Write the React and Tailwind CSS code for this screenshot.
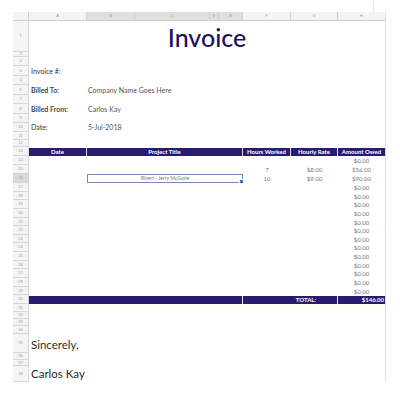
import React from "react";

const DARK = "bg-[#2b1b6f]";

function RowHead({ n, sel }) {
  return (
    <div
      className={`w-[16px] shrink-0 border-r border-b border-[#d6d6d6] flex items-center justify-center text-[4px] leading-none text-[#9a9a9a] font-['Liberation_Sans',sans-serif] ${
        sel ? "bg-[#dadada]" : "bg-[#f4f4f4]"
      }`}
    >
      {n}
    </div>
  );
}

function Row({ n, h, sel, children, className = "" }) {
  return (
    <div className={`flex ${h}`}>
      <RowHead n={n} sel={sel} />
      <div className={`flex-1 flex min-w-0 ${className}`}>{children}</div>
    </div>
  );
}

function AmountRow({ n, h, hours, rate, amount, children }) {
  return (
    <Row n={n} h={h}>
      <div className="w-[58px]" />
      <div className="w-[156px] relative">{children}</div>
      <div className="w-[48px] flex items-center justify-center text-[6px] text-[#777]">{hours}</div>
      <div className="w-[47px] flex items-center justify-center text-[6px] text-[#777]">{rate}</div>
      <div className="w-[47px] flex items-center justify-center text-[6px] text-[#777]">{amount}</div>
    </Row>
  );
}

export default function App() {
  const empty14to29 = [
    [17, "h-[9px]"],
    [18, "h-[8px]"],
    [19, "h-[9px]"],
    [20, "h-[9px]"],
    [21, "h-[8px]"],
    [22, "h-[9px]"],
    [23, "h-[8px]"],
    [24, "h-[9px]"],
    [25, "h-[9px]"],
    [26, "h-[8px]"],
    [27, "h-[9px]"],
    [28, "h-[9px]"],
    [29, "h-[8px]"],
  ];
  const colHead = "border-r border-b border-[#d0d0d0] flex items-center justify-center text-[4px] leading-none text-[#9a9a9a]";
  return (
    <div className="w-[400px] h-[395px] bg-white overflow-hidden pl-[13px] font-['Lato',sans-serif]">
      <div className="h-[12px] flex">
        <div className="ml-[360px] w-px h-full bg-[#ececec]" />
      </div>
      <div className="w-[373px] border-r border-[#dedede]">
        {/* column header */}
        <div className="flex h-[9px] font-['Liberation_Sans',sans-serif]">
          <div className={`w-[16px] bg-[#f4f4f4] ${colHead}`} />
          <div className={`w-[58px] bg-[#f4f4f4] ${colHead}`}>A</div>
          <div className={`w-[48px] bg-[#dfdfdf] ${colHead}`}>B</div>
          <div className={`w-[75px] bg-[#dfdfdf] ${colHead}`}>C</div>
          <div className={`w-[9px] bg-[#dfdfdf] ${colHead}`}>D</div>
          <div className={`w-[24px] bg-[#dfdfdf] ${colHead}`}>E</div>
          <div className={`w-[48px] bg-[#f4f4f4] ${colHead}`}>F</div>
          <div className={`w-[47px] bg-[#f4f4f4] ${colHead}`}>G</div>
          <div className={`w-[47px] bg-[#f4f4f4] border-b border-[#d0d0d0] flex items-center justify-center text-[4px] leading-none text-[#9a9a9a]`}>H</div>
        </div>

        <Row n={1} h="h-[31px]" className="items-center justify-center pt-[2px]">
          <span className="text-[25px] font-medium leading-none text-[#1e1260]">Invoice</span>
        </Row>
        <Row n={2} h="h-[5px]" />
        <Row n={3} h="h-[9px]" />
        <Row n={4} h="h-[10px]" className="items-center text-[7px] text-[#333]">
          <span className="pl-[2px]">Invoice #:</span>
        </Row>
        <Row n={5} h="h-[9px]" />
        <Row n={6} h="h-[10px]" className="items-center text-[7px]">
          <span className="w-[58px] pl-[2px] font-semibold text-[#333]">Billed To:</span>
          <span className="pl-[1px] text-[#555]">Company Name Goes Here</span>
        </Row>
        <Row n={7} h="h-[9px]" />
        <Row n={8} h="h-[10px]" className="items-center text-[7px]">
          <span className="w-[58px] pl-[2px] font-semibold text-[#333]">Billed From:</span>
          <span className="pl-[1px] text-[#555]">Carlos Kay</span>
        </Row>
        <Row n={9} h="h-[9px]" />
        <Row n={10} h="h-[9px]" className="items-center text-[7px]">
          <span className="w-[58px] pl-[2px] text-[#333]">Date:</span>
          <span className="pl-[1px] text-[#555]">5-Jul-2018</span>
        </Row>
        <Row n={11} h="h-[8px]" />
        <Row n={12} h="h-[7px]" />
        <Row n={13} h="h-[9px]" className="pt-[1px] text-[6px] font-bold text-white leading-none">
          <div className={`w-[58px] ${DARK} border-r border-[#e4e2ee] flex items-center justify-center`}>Date</div>
          <div className={`w-[156px] ${DARK} border-r border-[#e4e2ee] flex items-center justify-center`}>Project Title</div>
          <div className={`w-[48px] ${DARK} border-r border-[#e4e2ee] flex items-center justify-center`}>Hours Worked</div>
          <div className={`w-[47px] ${DARK} border-r border-[#e4e2ee] flex items-center justify-center`}>Hourly Rate</div>
          <div className={`w-[47px] ${DARK} flex items-center justify-center`}>Amount Owed</div>
        </Row>

        <AmountRow n={14} h="h-[9px]" amount="$0.00" />
        <AmountRow n={15} h="h-[9px]" hours="7" rate="$8.00" amount="$56.00" />
        <Row n={16} h="h-[9px]" sel>
          <div className="w-[58px]" />
          <div className="w-[156px] relative border border-[#6d8fc6] flex items-center justify-center text-[5px] text-[#777]">
            Rivert - Jerry McGuire
            <span className="absolute right-[-2px] bottom-[-2px] w-[3px] h-[3px] bg-[#3f6fc0] border border-white box-content" />
          </div>
          <div className="w-[48px] flex items-center justify-center text-[6px] text-[#777]">10</div>
          <div className="w-[47px] flex items-center justify-center text-[6px] text-[#777]">$9.00</div>
          <div className="w-[47px] flex items-center justify-center text-[6px] text-[#777]">$90.00</div>
        </Row>
        {empty14to29.map(([n, h]) => (
          <AmountRow key={n} n={n} h={h} amount="$0.00" />
        ))}
        <Row n={30} h="h-[9px]" className="pt-[1px] text-[6px] font-bold text-white leading-none">
          <div className={`w-[214px] ${DARK} border-r border-[#e4e2ee]`} />
          <div className={`w-[95px] ${DARK} border-r border-[#e4e2ee] flex items-center justify-end pr-[21px]`}>TOTAL:</div>
          <div className={`w-[47px] ${DARK} flex items-center justify-end pr-[1px]`}>$146.00</div>
        </Row>
        <Row n={31} h="h-[8px]" className="bg-[#fffdf3]" />
        <Row n={32} h="h-[7px]" />
        <Row n={33} h="h-[7px]" />
        <Row n={34} h="h-[8px]" />
        <Row n={35} h="h-[19px]" className="items-center pt-[2px]">
          <span className="pl-[2px] text-[11.5px] leading-none text-[#2a2a2a]">Sincerely,</span>
        </Row>
        <Row n={36} h="h-[7px]" />
        <Row n={37} h="h-[6px]" />
        <Row n={38} h="h-[16px]" className="items-center">
          <span className="pl-[2px] text-[11.5px] leading-none text-[#2a2a2a] whitespace-nowrap">Carlos Kay</span>
        </Row>
      </div>
    </div>
  );
}
